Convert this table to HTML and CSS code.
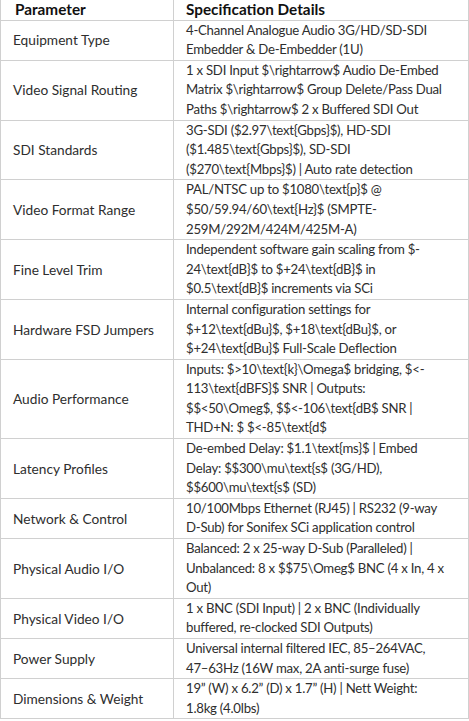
FILE: index.html
```html
<!DOCTYPE html>
<html>
	<head>
		<meta charset="utf-8">
		<title>Specification</title>
		<link rel="stylesheet" href="styles.css">
	</head>
	<body>
		<table class="spec">
			<tr>
				<th class="col1">Parameter</th>
				<th>Specification Details</th>
			</tr>
			<tr>
				<td>Equipment Type</td>
				<td>4-Channel Analogue Audio 3G/HD/SD-SDI<br>Embedder &amp; De-Embedder (1U)</td>
			</tr>
			<tr>
				<td>Video Signal Routing</td>
				<td>1 x SDI Input $\rightarrow$ Audio De-Embed<br>Matrix $\rightarrow$ Group Delete/Pass Dual<br>Paths $\rightarrow$ 2 x Buffered SDI Out</td>
			</tr>
			<tr>
				<td>SDI Standards</td>
				<td>3G-SDI ($2.97\text{Gbps}$), HD-SDI<br>($1.485\text{Gbps}$), SD-SDI<br>($270\text{Mbps}$) | Auto rate detection</td>
			</tr>
			<tr>
				<td>Video Format Range</td>
				<td>PAL/NTSC up to $1080\text{p}$ @<br>$50/59.94/60\text{Hz}$ (SMPTE-<br>259M/292M/424M/425M-A)</td>
			</tr>
			<tr>
				<td>Fine Level Trim</td>
				<td>Independent software gain scaling from $-<br>24\text{dB}$ to $+24\text{dB}$ in<br>$0.5\text{dB}$ increments via SCi</td>
			</tr>
			<tr>
				<td>Hardware FSD Jumpers</td>
				<td>Internal configuration settings for<br>$+12\text{dBu}$, $+18\text{dBu}$, or<br>$+24\text{dBu}$ Full-Scale Deflection</td>
			</tr>
			<tr>
				<td>Audio Performance</td>
				<td>Inputs: $&gt;10\text{k}\Omega$ bridging, $&lt;-<br>113\text{dBFS}$ SNR | Outputs:<br>$$&lt;50\Omeg$, $$&lt;-106\text{dB$ SNR |<br>THD+N: $ $&lt;-85\text{d$</td>
			</tr>
			<tr>
				<td>Latency Profiles</td>
				<td>De-embed Delay: $1.1\text{ms}$ | Embed<br>Delay: $$300\mu\text{s$ (3G/HD),<br>$$600\mu\text{s$ (SD)</td>
			</tr>
			<tr>
				<td>Network &amp; Control</td>
				<td>10/100Mbps Ethernet (RJ45) | RS232 (9-way<br>D-Sub) for Sonifex SCi application control</td>
			</tr>
			<tr>
				<td>Physical Audio I/O</td>
				<td>Balanced: 2 x 25-way D-Sub (Paralleled) |<br>Unbalanced: 8 x $$75\Omeg$ BNC (4 x In, 4 x<br>Out)</td>
			</tr>
			<tr>
				<td>Physical Video I/O</td>
				<td>1 x BNC (SDI Input) | 2 x BNC (Individually<br>buffered, re-clocked SDI Outputs)</td>
			</tr>
			<tr>
				<td>Power Supply</td>
				<td>Universal internal filtered IEC, 85–264VAC,<br>47–63Hz (16W max, 2A anti-surge fuse)</td>
			</tr>
			<tr>
				<td>Dimensions &amp; Weight</td>
				<td>19” (W) x 6.2” (D) x 1.7” (H) | Nett Weight:<br>1.8kg (4.0lbs)</td>
			</tr>
		</table>
	</body>
</html>
```
FILE: styles.css
```css
*{margin: 0; padding: 0;}
body{background: #fff; font-family: Lato, "Open Sans", sans-serif; font-size: 13.7px; color: #2e2e2e;}
.spec{width: 469px; border-collapse: collapse; table-layout: fixed;}
.spec th,.spec td{border: 1px solid #d0d0d0; line-height: 19.6px; padding: 0 6px 0 12px; text-align: left; vertical-align: middle; white-space: nowrap;}
.spec td + td{font-size: 13.2px; letter-spacing: -0.25px;}
.spec tr:first-child th{border-top: none;}
.spec th{font-weight: bold; font-size: 15.3px; color: #111;}
.spec .col1{width: 154px; padding-left: 14px; padding-right: 4px;}
```
